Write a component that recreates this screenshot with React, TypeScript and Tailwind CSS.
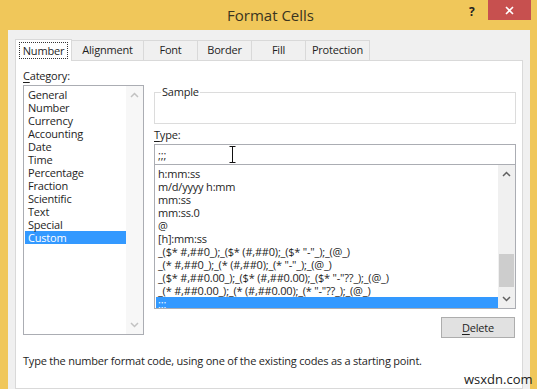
import React from 'react';

const categories = [
  'General',
  'Number',
  'Currency',
  'Accounting',
  'Date',
  'Time',
  'Percentage',
  'Fraction',
  'Scientific',
  'Text',
  'Special',
  'Custom',
];

const formats = [
  'h:mm:ss',
  'm/d/yyyy h:mm',
  'mm:ss',
  'mm:ss.0',
  '@',
  '[h]:mm:ss',
  '_($* #,##0_);_($* (#,##0);_($* "-"_);_(@_)',
  '_(* #,##0_);_(* (#,##0);_(* "-"_);_(@_)',
  '_($* #,##0.00_);_($* (#,##0.00);_($* "-"??_);_(@_)',
  '_(* #,##0.00_);_(* (#,##0.00);_(* "-"??_);_(@_)',
  ';;;',
];

const tabs = [
  { label: 'Number', w: 'w-[57px]' },
  { label: 'Alignment', w: 'w-[72px]' },
  { label: 'Font', w: 'w-[54px]' },
  { label: 'Border', w: 'w-[54px]' },
  { label: 'Fill', w: 'w-[54px]' },
  { label: 'Protection', w: 'w-[64px]' },
];

const Chevron = ({ up, dim }: { up?: boolean; dim?: boolean }) => (
  <svg width="9" height="6" viewBox="0 0 9 6">
    <polyline
      points={up ? '1,5 4.5,1.5 8,5' : '1,1 4.5,4.5 8,1'}
      fill="none"
      stroke={dim ? '#c2c2c2' : '#606060'}
      strokeWidth="1.5"
    />
  </svg>
);

export default function App() {
  return (
    <div className="relative w-[537px] h-[389px] overflow-hidden bg-[#f0c75a] flex flex-col font-['Open_Sans',sans-serif] text-[#1e1e1e]">
      {/* title bar */}
      <div className="h-[30px] shrink-0 relative flex items-center justify-center">
        <span className="text-[15px] text-[#3a3420] pl-[4px]">Format Cells</span>
        <span className="absolute left-[469px] top-[3px] text-[12px] font-bold text-[#222]">?</span>
        <div className="absolute left-[488px] top-0 w-[43px] h-[20px] bg-[#c7504f] flex items-center justify-center">
          <svg width="9" height="9" viewBox="0 0 9 9">
            <path d="M1 1 L8 8 M8 1 L1 8" stroke="#fff" strokeWidth="1.6" />
          </svg>
        </div>
      </div>

      {/* dialog body */}
      <div className="flex-1 ml-[8px] mr-[7px] bg-[#f0f0f0] pl-[7px] pr-[7px] pt-[9px] flex flex-col text-[11px] tracking-[-0.2px]">
        <div className="flex items-end h-[21px]">
          {tabs.map((t, i) =>
            i === 0 ? (
              <div
                key={t.label}
                className={`${t.w} h-[22px] -mb-px relative z-10 bg-white border border-b-0 border-[#d9d9d9] flex items-center justify-center`}
              >
                <span className="border border-dotted border-[#333] px-[3px] leading-[15px]">{t.label}</span>
              </div>
            ) : (
              <div
                key={t.label}
                className={`${t.w} h-[20px] bg-[#f0f0f0] border border-l-0 border-b-0 border-[#d9d9d9] flex items-center justify-center`}
              >
                {t.label}
              </div>
            )
          )}
        </div>

        <div className="flex-1 bg-white border border-[#d9d9d9] flex flex-col">
          <div className="flex pl-[7px] pr-[6px]">
            {/* category */}
            <div className="w-[121px] shrink-0 pt-[8px]">
              <div className="leading-[14px] h-[16px]">
                <span className="underline decoration-1 underline-offset-2">C</span>ategory:
              </div>
              <div className="h-[250px] border border-[#abadb3] flex">
                <div className="flex-1 pt-[2px] pl-px">
                  {categories.map((c) => (
                    <div
                      key={c}
                      className={`h-[13px] leading-[13px] pl-[3px] ${c === 'Custom' ? 'bg-[#3399ff] text-white' : ''}`}
                    >
                      {c}
                    </div>
                  ))}
                </div>
                <div className="w-[17px] bg-[#f7f7f7] flex flex-col justify-between items-center py-[6px]">
                  <Chevron up dim />
                  <Chevron dim />
                </div>
              </div>
            </div>

            {/* type */}
            <div className="flex-1 ml-[10px] pt-[31px]">
              <div className="relative h-[32px] border border-[#dcdcdc]">
                <span className="absolute -top-[9px] left-[6px] bg-white px-px leading-[15px]">Sample</span>
              </div>
              <div className="mt-[4px] leading-[14px] h-[16px]">
                <span className="underline decoration-1 underline-offset-2">T</span>ype:
              </div>
              <div className="relative h-[21px] border border-[#abadb3] pl-[3px] leading-[19px]">
                ;;;
                <svg className="absolute left-[74px] top-[1px]" width="7" height="17" viewBox="0 0 7 17">
                  <path d="M0.5 0.5 H6.5 M3.5 0.5 V16.5 M0.5 16.5 H6.5" stroke="#111" strokeWidth="1" fill="none" />
                </svg>
              </div>
              <div className="h-[145px] -mt-px border border-[#abadb3] flex">
                <div className="flex-1 pt-[2px] pl-px overflow-hidden whitespace-nowrap">
                  {formats.map((f) => (
                    <div
                      key={f}
                      className={`h-[13px] leading-[13px] pl-[2px] ${f === ';;;' ? 'bg-[#3399ff] text-white' : ''}`}
                    >
                      {f}
                    </div>
                  ))}
                </div>
                <div className="w-[17px] bg-[#f0f0f0] flex flex-col items-center py-[6px]">
                  <Chevron up />
                  <div className="flex-1 w-full flex flex-col justify-end pb-[9px]">
                    <div className="h-[33px] mx-px bg-[#cdcdcd]" />
                  </div>
                  <Chevron />
                </div>
              </div>
              <div className="flex justify-end mt-[8px] pr-px">
                <button className="w-[74px] h-[21px] border border-[#adadad] bg-[#e1e1e1] leading-[19px]">
                  <span className="underline decoration-1 underline-offset-2">D</span>elete
                </button>
              </div>
            </div>
          </div>
          <div className="pl-[7px] mt-[16px] leading-[14px]">
            Type the number format code, using one of the existing codes as a starting point.
          </div>
        </div>
      </div>

      {/* watermark */}
      <span className="absolute left-[464px] top-[371px] text-[13px] text-[#222] leading-[16px]">wsxdn.com</span>
    </div>
  );
}
